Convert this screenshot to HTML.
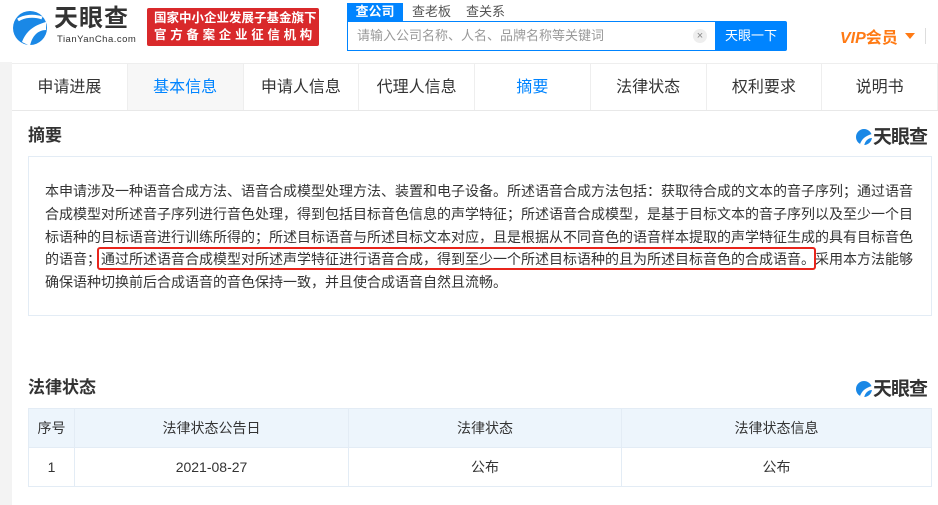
<!DOCTYPE html>
<html><head><meta charset="utf-8"><style>
*{margin:0;padding:0;box-sizing:border-box}
body{width:938px;height:505px;overflow:hidden;background:#fff;font-family:"Liberation Sans","Noto Sans CJK SC",sans-serif;color:#333;position:relative}
.abs{position:absolute}
.gray{left:0;top:62px;width:12px;height:443px;background:#f3f3f3}
.nav{left:12px;top:63px;width:926px;height:48px;border-top:1px solid #eee;border-bottom:1px solid #e8e8e8;display:flex}
.nav div{width:117px;text-align:center;line-height:47px;font-size:16px;color:#333;border-right:1px solid #eee}
.nav div.b{color:#0084ff}
.nav div.g{background:#f7f7f7}
.h{font-size:17px;font-weight:bold;color:#333}
.box{left:28px;top:156px;width:904px;height:160px;border:1px solid #e3ecf5}
.txt{left:45px;top:180px;font-size:14px;line-height:22.8px;color:#333;white-space:nowrap}
.red{left:97px;top:247px;width:719px;height:23px;border:2px solid #e8251c;border-radius:3px}
table{position:absolute;left:28px;top:408px;width:904px;border-collapse:collapse;font-size:14px}
td{border:1px solid #e3ecf5;text-align:center;height:39px;color:#333}
tr.hd td{background:#edf5fc}
.logo2{font-size:19px;font-weight:bold;color:#333;letter-spacing:-1px}
</style></head><body>
<svg class="abs" style="left:12px;top:8px" width="36" height="40" viewBox="0 0 36 40">
<circle cx="18" cy="20" r="17" fill="#1a88e6"/>
<path d="M10 34 C14 24 20 18 34 14 L34 22 C26 22 20 28 18 38Z" fill="#fff"/>
<path d="M6 12 C12 8 22 7 30 10" stroke="#fff" stroke-width="3" fill="none"/>
</svg>
<div class="abs" style="left:54px;top:6px;font-size:24px;line-height:26px;font-weight:bold;color:#333;letter-spacing:1px">天眼查</div>
<div class="abs" style="left:57px;top:34px;font-size:9.5px;line-height:11px;color:#333;letter-spacing:0.5px">TianYanCha.com</div>
<div class="abs" style="left:147px;top:8px;width:172px;height:38px;background:#d9292b;border-radius:2px;color:#fff;font-size:12.5px;font-weight:bold;line-height:17px;padding:2px 0 0 7px">国家中小企业发展子基金旗下<br><span style="letter-spacing:3.7px">官方备案企业征信机构</span></div>
<div class="abs" style="left:347px;top:3px;width:56px;height:19px;background:#0084ff;color:#fff;font-size:13px;text-align:center;line-height:18px;font-weight:bold">查公司</div>
<div class="abs" style="left:412px;top:3px;font-size:13px;color:#555;line-height:18px">查老板</div>
<div class="abs" style="left:466px;top:3px;font-size:13px;color:#555;line-height:18px">查关系</div>
<div class="abs" style="left:347px;top:21px;width:370px;height:30px;border:1px solid #0084ff;border-right:none;font-size:13px;color:#999;line-height:28px;padding-left:9px">请输入公司名称、人名、品牌名称等关键词</div>
<div class="abs" style="left:693px;top:29px;width:14px;height:14px;border-radius:7px;background:#eee;color:#888;font-size:11px;text-align:center;line-height:14px">×</div>
<div class="abs" style="left:715px;top:21px;width:72px;height:30px;background:#0084ff;border-radius:0 2px 2px 0;color:#fff;font-size:13px;text-align:center;line-height:30px">天眼一下</div>
<div class="abs" style="left:840px;top:24px;font-size:16px;font-weight:bold;color:#ff7a14;font-style:italic">VIP<span style="font-style:normal">会员</span></div>
<div class="abs" style="left:905px;top:33px;width:0;height:0;border-left:5px solid transparent;border-right:5px solid transparent;border-top:6px solid #ff7a14"></div>
<div class="abs" style="left:925px;top:28px;width:1px;height:16px;background:#ddd"></div>
<div class="abs gray"></div>
<div class="abs nav"><div>申请进展</div><div class="b g">基本信息</div><div>申请人信息</div><div>代理人信息</div><div class="b">摘要</div><div>法律状态</div><div>权利要求</div><div>说明书</div></div>
<div class="abs h" style="left:28px;top:121px">摘要</div>
<div class="abs" style="left:855px;top:122px"><svg width="18" height="18" style="vertical-align:-3px"><circle cx="9" cy="9" r="8" fill="#1a88e6"/><path d="M5 16 C7 11 10 8 17 6 L17 10 C13 10 10 13 9 18Z" fill="#fff"/></svg><span class="logo2">天眼查</span></div>
<div class="abs box"></div>
<div class="abs txt">本申请涉及一种语音合成方法、语音合成模型处理方法、装置和电子设备。所述语音合成方法包括：获取待合成的文本的音子序列；通过语音<br>合成模型对所述音子序列进行音色处理，得到包括目标音色信息的声学特征；所述语音合成模型，是基于目标文本的音子序列以及至少一个目<br>标语种的目标语音进行训练所得的；所述目标语音与所述目标文本对应，且是根据从不同音色的语音样本提取的声学特征生成的具有目标音色<br>的语音；通过所述语音合成模型对所述声学特征进行语音合成，得到至少一个所述目标语种的且为所述目标音色的合成语音。采用本方法能够<br>确保语种切换前后合成语音的音色保持一致，并且使合成语音自然且流畅。</div>
<div class="abs red"></div>
<div class="abs h" style="left:28px;top:373px">法律状态</div>
<div class="abs" style="left:855px;top:374px"><svg width="18" height="18" style="vertical-align:-3px"><circle cx="9" cy="9" r="8" fill="#1a88e6"/><path d="M5 16 C7 11 10 8 17 6 L17 10 C13 10 10 13 9 18Z" fill="#fff"/></svg><span class="logo2">天眼查</span></div>
<table>
<tr class="hd"><td style="width:46px">序号</td><td style="width:274px">法律状态公告日</td><td style="width:273px">法律状态</td><td>法律状态信息</td></tr>
<tr><td>1</td><td>2021-08-27</td><td>公布</td><td>公布</td></tr>
</table>
</body></html>
